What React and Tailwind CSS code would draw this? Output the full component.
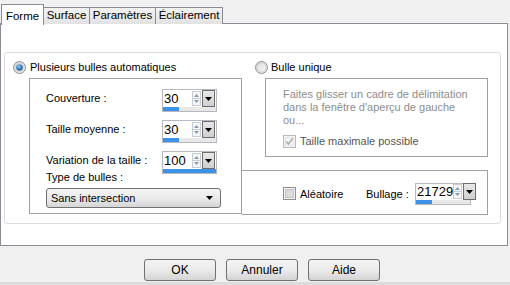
import React from 'react'

function Radio({ checked }) {
  return (
    <svg width="13" height="13" viewBox="0 0 13 13" className="shrink-0">
      <defs>
        <linearGradient id="rg-bg" x1="0" y1="0" x2="1" y2="1">
          <stop offset="0" stopColor="#dcdcdc" />
          <stop offset="1" stopColor="#f8f8f8" />
        </linearGradient>
        <radialGradient id="rg-dot" cx="0.4" cy="0.35" r="0.7">
          <stop offset="0" stopColor="#8fcaf5" />
          <stop offset="0.6" stopColor="#3a7dbd" />
          <stop offset="1" stopColor="#1d4f82" />
        </radialGradient>
      </defs>
      <circle cx="6.5" cy="6.5" r="6" fill="url(#rg-bg)" stroke="#8e8f8f" />
      <circle cx="6.5" cy="6.5" r="4.6" fill="none" stroke="#c8c8c8" strokeWidth="0.8" />
      {checked && <circle cx="6.5" cy="6.5" r="3.3" fill="url(#rg-dot)" />}
    </svg>
  )
}

function Check({ checked, disabled }) {
  return (
    <svg width="13" height="13" viewBox="0 0 13 13" className="shrink-0">
      <rect x="0.5" y="0.5" width="12" height="12" fill="#f4f4f4" stroke={disabled ? '#b9b9b9' : '#8e8f8f'} />
      <rect x="2.5" y="2.5" width="8" height="8" fill={disabled ? '#f4f4f4' : '#dcdcdc'} stroke={disabled ? '#e4e4e4' : '#c4c4c4'} />
      {checked && (
        <path d="M3.2 6.6 L5.4 9 L9.8 3.4" fill="none" stroke={disabled ? '#a8a8a8' : '#333'} strokeWidth="1.5" />
      )}
    </svg>
  )
}

function Caret() {
  return (
    <svg width="7" height="4" viewBox="0 0 7 4">
      <path d="M0 0 H7 L3.5 4 Z" fill="#000" />
    </svg>
  )
}

function Spin({ value, pct, w = 'w-[55px]', h = 'h-[23px]' }) {
  return (
    <div className={`flex flex-col ${w} ${h} border border-[#b5b8be] bg-white`}>
      <div className="flex flex-1 items-center min-h-0">
        <span className="flex-1 pl-[1px] text-[13px] leading-none text-black whitespace-nowrap">{value}</span>
        <svg width="9" height="15" viewBox="0 0 9 15" className="shrink-0 mr-[1px]">
          <rect x="0.5" y="0.5" width="8" height="14" fill="#f6f6f6" stroke="#c9ccd2" />
          <line x1="1" y1="7.5" x2="8" y2="7.5" stroke="#c9ccd2" />
          <path d="M2 6 H7 L4.5 3 Z" fill="#8c9bb0" />
          <path d="M2 9 H7 L4.5 12 Z" fill="#8c9bb0" />
        </svg>
        <div className="w-[13px] h-[17px] shrink-0 border border-[#6d6d6d] bg-gradient-to-b from-[#e8e8e8] to-[#cfcfcf] flex items-center justify-center mr-[1px]">
          <Caret />
        </div>
      </div>
      <div className="h-[4px] bg-[#e8e8e8]">
        <div className="h-full bg-[#3d91e6]" style={{ width: pct + '%' }} />
      </div>
    </div>
  )
}

function Button({ children }) {
  return (
    <div className="w-[72px] h-[22px] rounded-[3px] border border-[#707070] bg-gradient-to-b from-[#f4f4f4] via-[#ebebeb] to-[#d4d4d4] flex items-center justify-center text-[12px] text-black">
      {children}
    </div>
  )
}

export default function App() {
  return (
    <div
      className="w-[510px] h-[285px] bg-[#f0f0f0] flex flex-col overflow-hidden text-[11px] text-black"
      style={{ fontFamily: '"Liberation Sans", Arial, sans-serif' }}
    >
      {/* tabs */}
      <div className="flex items-end h-[24px] pt-[3px] pl-[1px] relative z-10 text-[11.5px]">
        <div className="w-[43px] h-[21px] -mb-[1px] bg-white border border-b-0 border-[#898c95] flex items-start justify-center pt-[3px]">
          Forme
        </div>
        <div className="w-[46px] h-[17px] bg-gradient-to-b from-[#f2f2f2] to-[#e2e2e2] border border-l-0 border-b-0 border-[#898c95] flex items-center justify-center">
          Surface
        </div>
        <div className="w-[66px] h-[17px] bg-gradient-to-b from-[#f2f2f2] to-[#e2e2e2] border border-l-0 border-b-0 border-[#898c95] flex items-center justify-center">
          Paramètres
        </div>
        <div className="w-[67px] h-[17px] bg-gradient-to-b from-[#f2f2f2] to-[#e2e2e2] border border-l-0 border-b-0 border-[#898c95] flex items-center justify-center">
          Éclairement
        </div>
      </div>

      {/* panel */}
      <div className="w-[508px] h-[223px] -mt-[1px] bg-white border border-[#898c95] shrink-0">
        <div className="ml-[3px] mt-[28px] w-[497px] h-[172px] border border-[#dcdcdc] rounded-[3px] flex">
          {/* left column */}
          <div className="flex flex-col pt-[7px] w-[237px]">
            <div className="flex items-center h-[14px] ml-[8px] gap-[4px]">
              <Radio checked />
              <span>Plusieurs bulles automatiques</span>
            </div>
            <div className="ml-[24px] mt-[4px] w-[213px] h-[136px] border border-[#a0a0a0] flex flex-col pt-[10px] pl-[16px]">
              <div className="flex flex-col gap-[8px]">
                <div className="flex h-[23px]">
                  <span className="w-[116px] pt-[1px]">Couverture :</span>
                  <Spin value="30" pct={30} />
                </div>
                <div className="flex h-[23px]">
                  <span className="w-[116px] pt-[1px]">Taille moyenne :</span>
                  <Spin value="30" pct={30} />
                </div>
                <div className="flex h-[23px]">
                  <span className="w-[116px] pt-[1px]">Variation de la taille :</span>
                  <Spin value="100" pct={100} />
                </div>
              </div>
              <div className="h-[13px] -mt-[3px] leading-[13px]">Type de bulles :</div>
              <div className="mt-[4px] w-[175px] h-[20px] rounded-[3px] border border-[#707070] bg-gradient-to-b from-[#f4f4f4] via-[#ebebeb] to-[#d6d6d6] flex items-center justify-between pl-[4px] pr-[7px]">
                <span>Sans intersection</span>
                <Caret />
              </div>
            </div>
          </div>

          {/* right column */}
          <div className="flex flex-col pt-[7px]">
            <div className="flex items-center h-[14px] ml-[13px] gap-[3px]">
              <Radio />
              <span>Bulle unique</span>
            </div>
            <div className="ml-[23px] mt-[4px] w-[223px] h-[79px] border border-[#a0a0a0] flex flex-col pt-[9px] pl-[17px] text-[#8d8d8d] leading-[13px]">
              <span>Faites glisser un cadre de délimitation</span>
              <span>dans la fenêtre d'aperçu de gauche</span>
              <span>ou...</span>
              <div className="flex items-center gap-[4px] mt-[8px]">
                <Check checked disabled />
                <span className="text-[#555]">Taille maximale possible</span>
              </div>
            </div>
            <div className="mt-[13px] w-[246px] h-[45px] border border-l-0 border-[#a0a0a0] flex items-center pl-[41px] pt-[2px]">
              <Check />
              <span className="ml-[4px] w-[66px] pt-[2px]">Aléatoire</span>
              <span className="w-[49px] pt-[1px]">Bullage :</span>
              <Spin value="21729" pct={30} w="w-[56px]" h="h-[22px]" />
            </div>
          </div>
        </div>
      </div>

      {/* buttons */}
      <div className="flex gap-[10px] pl-[144px] mt-[13px]">
        <Button>OK</Button>
        <Button>Annuler</Button>
        <Button>Aide</Button>
      </div>
      <div className="mt-auto h-[3px] bg-[#dcdcdc]" />
    </div>
  )
}
